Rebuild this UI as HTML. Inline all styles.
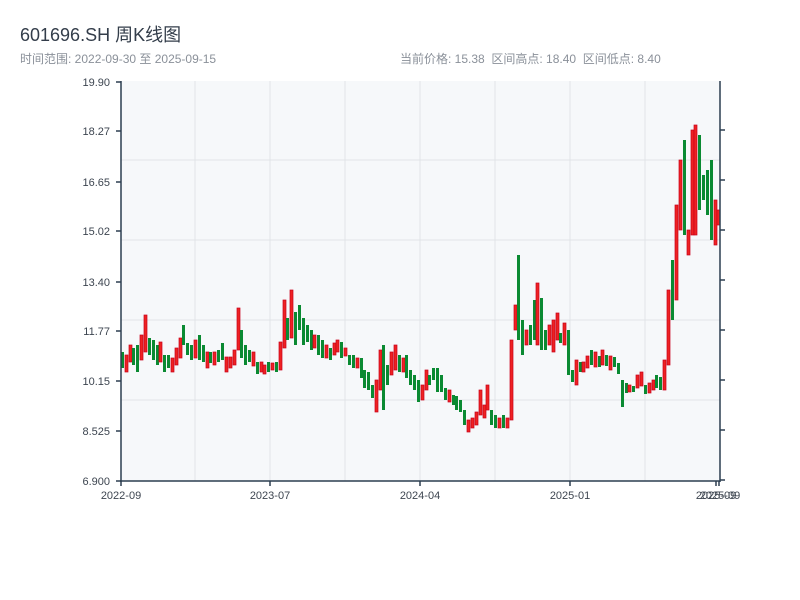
<!DOCTYPE html>
<html><head><meta charset="utf-8"><style>
body{margin:0;width:800px;height:600px;background:#fff;overflow:hidden;font-family:"Liberation Sans","Noto Sans CJK SC",sans-serif}
.r{fill:#ee2222;stroke:#c8001a;stroke-width:0.7}
.g{fill:#0a8a32}
</style></head><body>
<svg width="800" height="600" xmlns="http://www.w3.org/2000/svg" style="position:absolute;left:0;top:0;font-family:'Liberation Sans','Noto Sans CJK SC',sans-serif">
<text x="20" y="41" font-size="18" fill="#333d4a">601696.SH 周K线图</text>
<text x="20" y="63" font-size="12" fill="#8a9099">时间范围: 2022-09-30 至 2025-09-15</text>
<text x="400" y="63" font-size="12" fill="#8a9099" xml:space="preserve">当前价格: 15.38  区间高点: 18.40  区间低点: 8.40</text>
<rect x="121" y="81" width="599" height="400" fill="#f6f8fa"/>
<g stroke="#e1e4e8" stroke-width="1">
<line x1="121" y1="160" x2="720" y2="160"/><line x1="121" y1="240" x2="720" y2="240"/>
<line x1="121" y1="320" x2="720" y2="320"/><line x1="121" y1="400" x2="720" y2="400"/>
<line x1="195" y1="81" x2="195" y2="481"/><line x1="270" y1="81" x2="270" y2="481"/>
<line x1="345" y1="81" x2="345" y2="481"/><line x1="420" y1="81" x2="420" y2="481"/>
<line x1="495" y1="81" x2="495" y2="481"/><line x1="570" y1="81" x2="570" y2="481"/>
<line x1="645" y1="81" x2="645" y2="481"/>
</g>
<g>
<rect class="g" x="121" y="352" width="3" height="16"/><rect class="r" x="125" y="355" width="3" height="17"/><rect class="r" x="129" y="345" width="3" height="17"/><rect class="g" x="132" y="348" width="3" height="17"/><rect class="g" x="136" y="345" width="3" height="27"/><rect class="r" x="140" y="335" width="3" height="25"/><rect class="r" x="144" y="315" width="3" height="37"/><rect class="g" x="148" y="338" width="3" height="17"/><rect class="g" x="152" y="340" width="3" height="20"/><rect class="g" x="156" y="345" width="3" height="20"/>
<rect class="r" x="159" y="342" width="3" height="20"/><rect class="g" x="163" y="355" width="3" height="17"/><rect class="g" x="167" y="355" width="3" height="13"/><rect class="r" x="171" y="358" width="3" height="14"/><rect class="r" x="175" y="348" width="3" height="17"/><rect class="r" x="179" y="338" width="3" height="20"/><rect class="g" x="182" y="325" width="3" height="20"/><rect class="g" x="186" y="343" width="3" height="12"/><rect class="g" x="190" y="345" width="3" height="15"/><rect class="r" x="194" y="340" width="3" height="18"/>
<rect class="g" x="198" y="335" width="3" height="25"/><rect class="g" x="202" y="345" width="3" height="17"/><rect class="r" x="206" y="352" width="3" height="16"/><rect class="g" x="209" y="352" width="3" height="11"/><rect class="r" x="213" y="352" width="3" height="13"/><rect class="g" x="217" y="350" width="3" height="12"/><rect class="g" x="221" y="343" width="3" height="17"/><rect class="r" x="225" y="357" width="3" height="15"/><rect class="r" x="229" y="357" width="3" height="11"/><rect class="r" x="233" y="350" width="3" height="15"/>
<rect class="r" x="237" y="308" width="3" height="42"/><rect class="g" x="240" y="330" width="3" height="28"/><rect class="g" x="244" y="345" width="3" height="20"/><rect class="g" x="248" y="350" width="3" height="12"/><rect class="r" x="252" y="352" width="3" height="14"/><rect class="g" x="256" y="362" width="3" height="12"/><rect class="r" x="260" y="362" width="3" height="10"/><rect class="r" x="263" y="365" width="3" height="9"/><rect class="g" x="267" y="362" width="3" height="10"/><rect class="r" x="271" y="363" width="3" height="7"/>
<rect class="g" x="275" y="362" width="3" height="10"/><rect class="r" x="279" y="342" width="3" height="28"/><rect class="r" x="283" y="300" width="3" height="48"/><rect class="g" x="286" y="318" width="3" height="22"/><rect class="r" x="290" y="290" width="3" height="48"/><rect class="g" x="294" y="312" width="3" height="33"/><rect class="g" x="298" y="305" width="3" height="25"/><rect class="g" x="302" y="318" width="3" height="27"/><rect class="g" x="306" y="325" width="3" height="17"/><rect class="g" x="310" y="330" width="3" height="20"/>
<rect class="r" x="313" y="335" width="3" height="13"/><rect class="g" x="317" y="335" width="3" height="20"/><rect class="g" x="321" y="340" width="3" height="18"/><rect class="r" x="325" y="345" width="3" height="13"/><rect class="g" x="329" y="348" width="3" height="12"/><rect class="r" x="333" y="343" width="3" height="12"/><rect class="r" x="336" y="340" width="3" height="12"/><rect class="g" x="340" y="342" width="3" height="16"/><rect class="r" x="344" y="348" width="3" height="8"/><rect class="g" x="348" y="355" width="3" height="10"/>
<rect class="g" x="352" y="355" width="3" height="13"/><rect class="r" x="356" y="358" width="3" height="10"/><rect class="g" x="360" y="358" width="3" height="20"/><rect class="g" x="363" y="370" width="3" height="18"/><rect class="g" x="367" y="372" width="3" height="18"/><rect class="g" x="371" y="385" width="3" height="13"/><rect class="r" x="375" y="380" width="3" height="32"/><rect class="r" x="379" y="350" width="3" height="40"/><rect class="g" x="382" y="345" width="3" height="65"/><rect class="g" x="386" y="365" width="3" height="20"/>
<rect class="r" x="390" y="352" width="3" height="23"/><rect class="r" x="394" y="345" width="3" height="25"/><rect class="g" x="398" y="355" width="3" height="17"/><rect class="r" x="402" y="358" width="3" height="14"/><rect class="g" x="405" y="355" width="3" height="23"/><rect class="g" x="409" y="370" width="3" height="15"/><rect class="g" x="413" y="375" width="3" height="15"/><rect class="g" x="417" y="380" width="3" height="22"/><rect class="r" x="421" y="385" width="3" height="15"/><rect class="r" x="425" y="370" width="3" height="20"/>
<rect class="g" x="428" y="375" width="3" height="10"/><rect class="g" x="432" y="368" width="3" height="12"/><rect class="g" x="436" y="368" width="3" height="24"/><rect class="g" x="440" y="375" width="3" height="17"/><rect class="g" x="444" y="388" width="3" height="12"/><rect class="r" x="448" y="390" width="3" height="12"/><rect class="g" x="452" y="395" width="3" height="10"/><rect class="g" x="455" y="396" width="3" height="14"/><rect class="g" x="459" y="400" width="3" height="12"/><rect class="g" x="463" y="410" width="3" height="15"/>
<rect class="r" x="467" y="420" width="3" height="12"/><rect class="r" x="471" y="418" width="3" height="10"/><rect class="r" x="475" y="412" width="3" height="13"/><rect class="r" x="479" y="390" width="3" height="25"/><rect class="r" x="483" y="405" width="3" height="13"/><rect class="r" x="486" y="385" width="3" height="25"/><rect class="g" x="490" y="410" width="3" height="15"/><rect class="g" x="494" y="415" width="3" height="13"/><rect class="r" x="498" y="418" width="3" height="10"/><rect class="g" x="502" y="415" width="3" height="13"/>
<rect class="r" x="506" y="418" width="3" height="10"/><rect class="r" x="510" y="340" width="3" height="80"/><rect class="r" x="514" y="305" width="3" height="25"/><rect class="g" x="517" y="255" width="3" height="85"/><rect class="g" x="521" y="320" width="3" height="35"/><rect class="r" x="525" y="330" width="3" height="15"/><rect class="g" x="529" y="325" width="3" height="20"/><rect class="g" x="533" y="300" width="3" height="40"/><rect class="r" x="536" y="283" width="3" height="62"/><rect class="g" x="540" y="298" width="3" height="52"/>
<rect class="g" x="544" y="330" width="3" height="20"/><rect class="r" x="548" y="325" width="3" height="20"/><rect class="r" x="552" y="320" width="3" height="32"/><rect class="r" x="556" y="313" width="3" height="27"/><rect class="g" x="559" y="333" width="3" height="10"/><rect class="r" x="563" y="323" width="3" height="22"/><rect class="g" x="567" y="330" width="3" height="45"/><rect class="g" x="571" y="370" width="3" height="12"/><rect class="r" x="575" y="360" width="3" height="25"/><rect class="g" x="579" y="362" width="3" height="10"/>
<rect class="r" x="582" y="362" width="3" height="10"/><rect class="r" x="586" y="356" width="3" height="12"/><rect class="g" x="590" y="350" width="3" height="15"/><rect class="r" x="594" y="352" width="3" height="15"/><rect class="g" x="598" y="356" width="3" height="11"/><rect class="r" x="601" y="350" width="3" height="15"/><rect class="g" x="605" y="355" width="3" height="11"/><rect class="r" x="609" y="356" width="3" height="14"/><rect class="g" x="613" y="357" width="3" height="10"/><rect class="g" x="617" y="363" width="3" height="11"/>
<rect class="g" x="621" y="380" width="3" height="27"/><rect class="g" x="625" y="383" width="3" height="10"/><rect class="r" x="628" y="385" width="3" height="7"/><rect class="g" x="632" y="386" width="3" height="6"/><rect class="r" x="636" y="375" width="3" height="13"/><rect class="r" x="640" y="372" width="3" height="14"/><rect class="g" x="644" y="385" width="3" height="9"/><rect class="r" x="648" y="383" width="3" height="10"/><rect class="r" x="652" y="380" width="3" height="10"/><rect class="g" x="655" y="375" width="3" height="13"/>
<rect class="g" x="659" y="377" width="3" height="13"/><rect class="r" x="663" y="360" width="3" height="30"/><rect class="r" x="667" y="290" width="3" height="75"/><rect class="g" x="671" y="260" width="3" height="60"/><rect class="r" x="675" y="205" width="3" height="95"/><rect class="r" x="679" y="160" width="3" height="70"/><rect class="g" x="683" y="140" width="3" height="95"/><rect class="r" x="687" y="230" width="3" height="25"/><rect class="r" x="691" y="130" width="3" height="105"/><rect class="r" x="694" y="125" width="3" height="110"/>
<rect class="g" x="698" y="135" width="3" height="75"/><rect class="g" x="702" y="175" width="3" height="25"/><rect class="g" x="706" y="170" width="3" height="45"/><rect class="g" x="710" y="160" width="3" height="80"/><rect class="r" x="714" y="200" width="3" height="45"/><rect class="r" x="717" y="210" width="3" height="15"/>
</g>
<g stroke="#2c3e50" stroke-width="1.5">
<line x1="121" y1="81" x2="121" y2="482"/><line x1="120" y1="481" x2="720" y2="481"/>
<line x1="720" y1="81" x2="720" y2="482"/>
<line x1="116" y1="82" x2="121" y2="82"/><line x1="116" y1="131" x2="121" y2="131"/>
<line x1="116" y1="182" x2="121" y2="182"/><line x1="116" y1="231" x2="121" y2="231"/>
<line x1="116" y1="282" x2="121" y2="282"/><line x1="116" y1="331" x2="121" y2="331"/>
<line x1="116" y1="381" x2="121" y2="381"/><line x1="116" y1="431" x2="121" y2="431"/>
<line x1="116" y1="481" x2="121" y2="481"/>
<line x1="720" y1="130" x2="725" y2="130"/><line x1="720" y1="180" x2="725" y2="180"/>
<line x1="720" y1="230" x2="725" y2="230"/><line x1="720" y1="280" x2="725" y2="280"/>
<line x1="720" y1="330" x2="725" y2="330"/><line x1="720" y1="380" x2="725" y2="380"/>
<line x1="720" y1="430" x2="725" y2="430"/><line x1="720" y1="480" x2="725" y2="480"/>
<line x1="121" y1="481" x2="121" y2="486"/><line x1="270" y1="481" x2="270" y2="486"/>
<line x1="420" y1="481" x2="420" y2="486"/><line x1="570" y1="481" x2="570" y2="486"/>
<line x1="716" y1="481" x2="716" y2="486"/><line x1="719" y1="481" x2="719" y2="486"/>
</g>
<g font-size="11" fill="#3d4550" text-anchor="end">
<text x="110" y="86">19.90</text><text x="110" y="135">18.27</text><text x="110" y="186">16.65</text>
<text x="110" y="235">15.02</text><text x="110" y="286">13.40</text><text x="110" y="335">11.77</text>
<text x="110" y="385">10.15</text><text x="110" y="435">8.525</text><text x="110" y="485">6.900</text>
</g>
<g font-size="11" fill="#3d4550" text-anchor="middle">
<text x="121" y="499">2022-09</text><text x="270" y="499">2023-07</text>
<text x="420" y="499">2024-04</text><text x="570" y="499">2025-01</text>
<text x="716" y="499">2025-09</text><text x="720" y="499">2025-09</text>
</g>
</svg>
</body></html>
